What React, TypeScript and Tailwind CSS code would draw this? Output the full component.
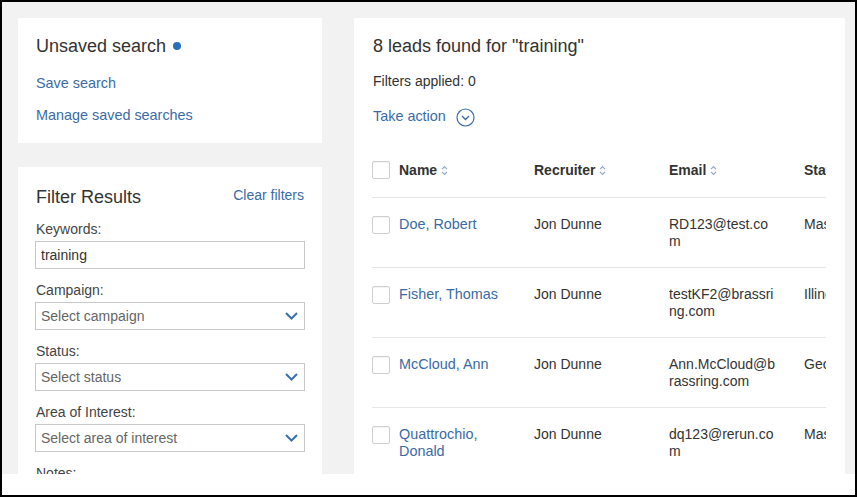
import React from 'react'

const LINK = 'text-[#3b6ba5]'

const leads = [
  { name: 'Doe, Robert', recruiter: 'Jon Dunne', email: ['RD123@test.co', 'm'], state: 'Massachusetts' },
  { name: 'Fisher, Thomas', recruiter: 'Jon Dunne', email: ['testKF2@brassri', 'ng.com'], state: 'Illinois' },
  { name: 'McCloud, Ann', recruiter: 'Jon Dunne', email: ['Ann.McCloud@b', 'rassring.com'], state: 'Georgia' },
  { name: 'Quattrochio, Donald', recruiter: 'Jon Dunne', email: ['dq123@rerun.co', 'm'], state: 'Massachusetts' },
]

function SortIcon() {
  return (
    <svg width="7" height="11" viewBox="0 0 7 11" className="ml-[4px] shrink-0">
      <path d="M1 4.2 L3.5 1.6 L6 4.2" fill="none" stroke="#8fa8c8" strokeWidth="1.2" />
      <path d="M1 6.8 L3.5 9.4 L6 6.8" fill="none" stroke="#8fa8c8" strokeWidth="1.2" />
    </svg>
  )
}

function Checkbox() {
  return <div className="w-[18px] h-[18px] shrink-0 border border-[#cfcfcf] bg-white rounded-[2px] shadow-[inset_0_1px_1px_rgba(0,0,0,0.05)]" />
}

function Chevron() {
  return (
    <svg width="13" height="8" viewBox="0 0 13 8">
      <path d="M1 1 L6.5 6.5 L12 1" fill="none" stroke="#3a6fb0" strokeWidth="2" />
    </svg>
  )
}

function Field({ label, children }: { label: string; children: React.ReactNode }) {
  return (
    <div className="mb-[12px]">
      <div className="h-[18px] leading-[18px] text-[14px] text-[#444] pl-[1px] mb-[3px]">{label}</div>
      {children}
    </div>
  )
}

function SelectBox({ placeholder }: { placeholder: string }) {
  return (
    <div className="h-[28px] border border-[#c8c8c8] bg-white flex items-center justify-between pl-[5px] pr-[6px]">
      <span className="text-[14px] text-[#666]">{placeholder}</span>
      <Chevron />
    </div>
  )
}

export default function App() {
  return (
    <div
      className="w-[857px] h-[497px] border-2 border-black bg-white overflow-hidden"
      style={{ fontFamily: '"Liberation Sans", Arial, sans-serif' }}
    >
      <div className="h-[472px] bg-[#f2f2f2] flex gap-8 pt-4 pl-4 overflow-hidden">
        {/* left column */}
        <div className="w-[304px] shrink-0 flex flex-col gap-6 min-h-0">
          <div className="h-[125px] shrink-0 bg-white pt-[18px] px-[18px]">
            <div className="flex items-center h-[20px] leading-[20px] text-[18px] text-[#333]">
              Unsaved search
              <span className="ml-[7px] w-[8px] h-[8px] rounded-full bg-[#2a6ebb]" />
            </div>
            <div className={`mt-[17px] h-[20px] leading-[20px] text-[14.4px] ${LINK}`}>Save search</div>
            <div className={`mt-[12px] h-[20px] leading-[20px] text-[14.4px] ${LINK}`}>Manage saved searches</div>
          </div>

          <div className="flex-1 min-h-0 overflow-hidden bg-white pt-[20px] px-[17px]">
            <div className="flex items-center justify-between h-[20px] mb-[13px]">
              <span className="text-[18px] text-[#333] pl-[1px]">Filter Results</span>
              <span className={`text-[14px] ${LINK} -mt-[3px] pr-[1px]`}>Clear filters</span>
            </div>
            <Field label="Keywords:">
              <div className="h-[28px] border border-[#c8c8c8] bg-white flex items-center pl-[5px] text-[14px] text-[#333]">
                training
              </div>
            </Field>
            <Field label="Campaign:">
              <SelectBox placeholder="Select campaign" />
            </Field>
            <Field label="Status:">
              <SelectBox placeholder="Select status" />
            </Field>
            <Field label="Area of Interest:">
              <SelectBox placeholder="Select area of interest" />
            </Field>
            <Field label="Notes:">
              <div className="h-[28px] border border-[#c8c8c8] bg-white" />
            </Field>
          </div>
        </div>

        {/* results */}
        <div className="w-[491px] shrink-0 bg-white pt-[18px] pl-[18px] pr-[19px]">
          <div className="pl-[1px] h-[20px] leading-[20px] text-[18px] text-[#333]">8 leads found for "training"</div>
          <div className="pl-[1px] mt-[17px] h-[16px] leading-[16px] text-[14px] text-[#333]">Filters applied: 0</div>
          <div className={`pl-[1px] mt-[18px] h-[20px] flex items-center text-[14.4px] ${LINK}`}>
            Take action
            <svg width="19" height="19" viewBox="0 0 19 19" className="ml-[10px]">
              <circle cx="9.5" cy="9.5" r="8.5" fill="none" stroke="#3b6ba5" strokeWidth="1.2" />
              <path d="M6 8 L9.5 11.5 L13 8" fill="none" stroke="#3b6ba5" strokeWidth="1.3" />
            </svg>
          </div>

          <div className="mt-[34px] overflow-hidden">
            <div className="h-[37px] border-b border-[#e6e6e6] flex text-[14px] font-bold text-[#333]">
              <Checkbox />
              <div className="w-[135px] shrink-0 ml-[9px] flex items-center h-[18px]">Name<SortIcon /></div>
              <div className="w-[135px] shrink-0 flex items-center h-[18px]">Recruiter<SortIcon /></div>
              <div className="w-[135px] shrink-0 flex items-center h-[18px]">Email<SortIcon /></div>
              <div className="w-[135px] shrink-0 flex items-center h-[18px] whitespace-nowrap">State<SortIcon /></div>
            </div>
            {leads.map((l) => (
              <div key={l.name} className="h-[70px] border-b border-[#e6e6e6] flex pt-[18px] text-[14px] leading-[17px] text-[#333]">
                <Checkbox />
                <div className={`w-[135px] shrink-0 ml-[9px] pr-[20px] text-[14.4px] ${LINK}`}>{l.name}</div>
                <div className="w-[135px] shrink-0 pr-[20px]">{l.recruiter}</div>
                <div className="w-[135px] shrink-0 pr-[10px] whitespace-nowrap">
                  {l.email[0]}
                  <br />
                  {l.email[1]}
                </div>
                <div className="w-[135px] shrink-0 whitespace-nowrap">{l.state}</div>
              </div>
            ))}
          </div>
        </div>
      </div>
    </div>
  )
}
